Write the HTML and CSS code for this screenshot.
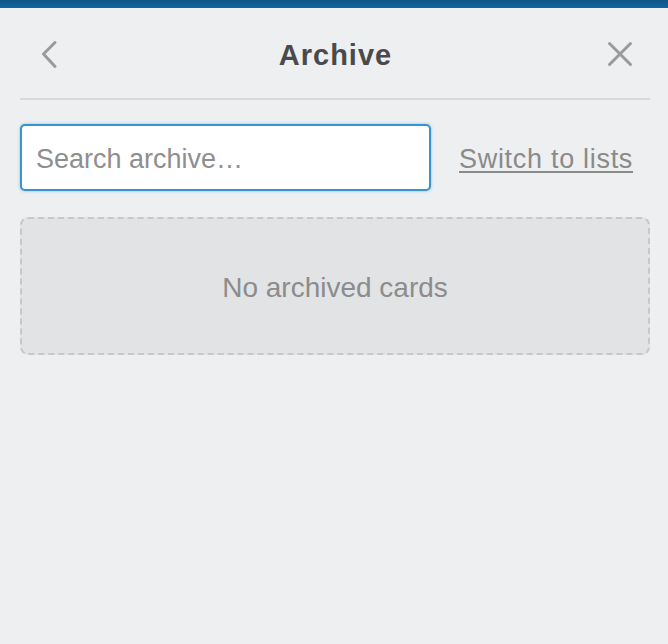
FILE: index.html
```html
<!DOCTYPE html>
<html lang="en">
<head>
<meta charset="utf-8">
<title>Archive</title>
<link rel="stylesheet" href="styles.css">
</head>
<body>
<div class="topbar"></div>
<div class="panel">
  <header class="header">
    <button class="icon-btn back" aria-label="Back">
      <svg width="20" height="30" viewBox="0 0 20 30"><path d="M17 3.5 L5.5 15 L17 27.5" fill="none" stroke="#9a9a9a" stroke-width="3" stroke-linecap="round" stroke-linejoin="round"/></svg>
    </button>
    <h1 class="title">Archive</h1>
    <button class="icon-btn close" aria-label="Close">
      <svg width="32" height="32" viewBox="0 0 32 32"><path d="M5.5 5.5 L26.5 26.5 M26.5 5.5 L5.5 26.5" fill="none" stroke="#9a9a9a" stroke-width="3" stroke-linecap="round"/></svg>
    </button>
  </header>
  <div class="search-row">
    <input class="search" type="text" placeholder="Search archive…">
    <a class="switch" href="#">Switch to lists</a>
  </div>
  <div class="empty">No archived cards</div>
</div>
</body>
</html>
```
FILE: styles.css
```css
html, body {
  margin: 0;
  padding: 0;
  background: #edeff1;
  font-family: "Liberation Sans", Arial, Helvetica, sans-serif;
}

.topbar {
  height: 8px;
  background: linear-gradient(#0d5687, #10659c);
}

.panel {
  padding: 0 18px 0 20px;
}

.header {
  height: 90px;
  display: grid;
  grid-template-columns: 1fr auto 1fr;
  align-items: center;
  border-bottom: 2px solid #d8d9dc;
}

.icon-btn {
  background: none;
  border: 0;
  padding: 2px 0 0;
  display: flex;
  cursor: pointer;
}

.back {
  justify-self: start;
  margin-left: 18px;
}

.close {
  justify-self: end;
  margin-right: 14px;
}

.title {
  margin: 0;
  padding: 4px 0 0 1px;
  font-size: 29px;
  font-weight: bold;
  letter-spacing: 1px;
  color: #4a4a4a;
}

.search-row {
  display: flex;
  align-items: center;
  margin-top: 24px;
}

.search {
  box-sizing: border-box;
  width: 411px;
  height: 67px;
  margin: 0;
  border: 2px solid #3794d1;
  border-radius: 5px;
  box-shadow: 0 0 3px rgba(55, 148, 209, 0.55);
  background: #fff;
  padding: 4px 14px 0;
  font-family: "Liberation Sans", Arial, Helvetica, sans-serif;
  font-size: 27px;
  color: #333;
  outline: none;
}

.search::placeholder {
  color: #8e8e8e;
}

.switch {
  margin-left: 28px;
  padding-top: 4px;
  font-size: 27px;
  letter-spacing: 0.7px;
  color: #8a8a8a;
  text-decoration: underline;
  text-decoration-thickness: 2px;
  text-underline-offset: 3px;
}

.empty {
  box-sizing: border-box;
  margin-top: 26px;
  height: 138px;
  padding-top: 3px;
  border: 2px dashed #c6c8cb;
  border-radius: 8px;
  background: #e2e3e5;
  display: flex;
  align-items: center;
  justify-content: center;
  font-size: 28px;
  color: #8c8c8c;
}
```
